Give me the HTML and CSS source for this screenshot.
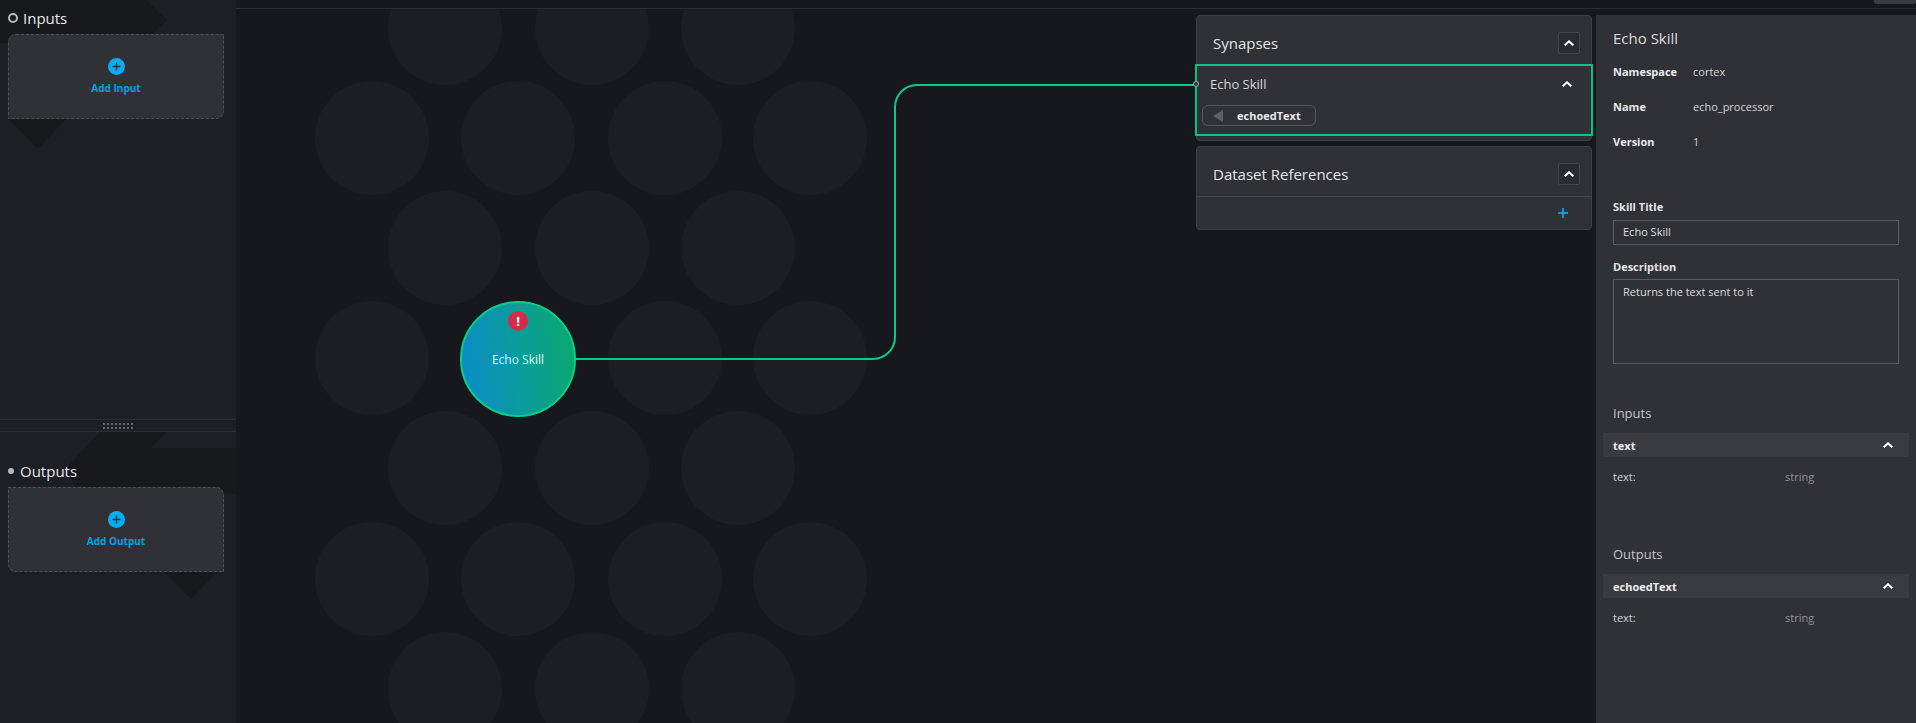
FILE: index.html
```html
<!DOCTYPE html>
<html lang="en">
<head>
  <meta charset="UTF-8">
  <title>Echo Skill</title>
  <link rel="stylesheet" href="styles.css">
</head>
<body>
  <div class="app">
    <aside class="sidebar">
      <section class="dock dock-inputs">
        <svg class="dock-bg" width="236" height="419" viewBox="0 0 236 419">
          <polygon points="0,0 147,0 167,20 144,43 0,43"/>
          <polygon points="8,119 66,119 38,149"/>
        </svg>
        <h2 class="dock-title"><span class="ring"></span>Inputs</h2>
        <div class="add-card add-card-in">
          <span class="add-icon"><svg width="9" height="9" viewBox="0 0 9 9"><path d="M4.5 0.5v8M0.5 4.5h8"/></svg></span>
          <span class="add-label">Add Input</span>
        </div>
      </section>
      <div class="splitter"><span class="grip"></span></div>
      <section class="dock dock-outputs">
        <svg class="dock-bg" width="236" height="292" viewBox="0 0 236 292">
          <polygon points="100,0 167,0 151,16 236,16 236,62 78,62 66,36"/>
          <polygon points="163,139 218,139 191,167"/>
        </svg>
        <h2 class="dock-title"><span class="dot"></span>Outputs</h2>
        <div class="add-card add-card-out">
          <span class="add-icon"><svg width="9" height="9" viewBox="0 0 9 9"><path d="M4.5 0.5v8M0.5 4.5h8"/></svg></span>
          <span class="add-label">Add Output</span>
        </div>
      </section>
    </aside>

    <main class="main">
      <div class="topbar"><span class="topbar-btn"></span></div>
      <div class="workspace">
        <svg class="graph" width="1680" height="714" viewBox="236 9 1680 714">
          <g class="hex">
            <circle cx="445" cy="28" r="57"/><circle cx="592" cy="28" r="57"/><circle cx="738" cy="28" r="57"/>
            <circle cx="372" cy="138" r="57"/><circle cx="518" cy="138" r="57"/><circle cx="665" cy="138" r="57"/><circle cx="810" cy="138" r="57"/>
            <circle cx="445" cy="248" r="57"/><circle cx="592" cy="248" r="57"/><circle cx="738" cy="248" r="57"/>
            <circle cx="372" cy="358" r="57"/><circle cx="518" cy="358" r="57"/><circle cx="665" cy="358" r="57"/><circle cx="810" cy="358" r="57"/>
            <circle cx="445" cy="468" r="57"/><circle cx="592" cy="468" r="57"/><circle cx="738" cy="468" r="57"/>
            <circle cx="372" cy="579" r="57"/><circle cx="518" cy="579" r="57"/><circle cx="665" cy="579" r="57"/><circle cx="810" cy="579" r="57"/>
            <circle cx="445" cy="689" r="57"/><circle cx="592" cy="689" r="57"/><circle cx="738" cy="689" r="57"/>
          </g>
          <path class="edge" d="M576 359H873A22 22 0 0 0 895 337V107A22 22 0 0 1 917 85H1196"/>
        </svg>

        <div class="node">
          <span class="node-badge">!</span>
          <span class="node-label">Echo Skill</span>
        </div>

        <div class="stack">
          <section class="card card-synapses">
            <header class="card-head">
              <h3>Synapses</h3>
              <button class="square-btn"><svg class="chev" width="10" height="6" viewBox="0 0 10 6"><path d="M.7 5.3L5 1.3l4.3 4"/></svg></button>
            </header>
            <div class="synapse">
              <span class="port"></span>
              <div class="synapse-top">
                <span>Echo Skill</span>
                <svg class="chev" width="10" height="6" viewBox="0 0 10 6"><path d="M.7 5.3L5 1.3l4.3 4"/></svg>
              </div>
              <div class="pill"><span class="pill-arrow"></span><b>echoedText</b></div>
            </div>
          </section>

          <section class="card">
            <header class="card-head card-head-line">
              <h3>Dataset References</h3>
              <button class="square-btn"><svg class="chev" width="10" height="6" viewBox="0 0 10 6"><path d="M.7 5.3L5 1.3l4.3 4"/></svg></button>
            </header>
            <div class="card-foot">
              <svg class="plus" width="10" height="10" viewBox="0 0 10 10"><path d="M5 0v10M0 5h10"/></svg>
            </div>
          </section>
        </div>

        <aside class="details">
          <h3 class="details-title">Echo Skill</h3>
          <dl class="meta">
            <dt>Namespace</dt><dd>cortex</dd>
            <dt>Name</dt><dd>echo_processor</dd>
            <dt>Version</dt><dd>1</dd>
          </dl>
          <label class="field-label field-first">Skill Title</label>
          <div class="field field-input">Echo Skill</div>
          <label class="field-label">Description</label>
          <div class="field field-area">Returns the text sent to it</div>

          <h4 class="sub-title sub-inputs">Inputs</h4>
          <div class="row-head">
            <b>text</b>
            <svg class="chev" width="10" height="6" viewBox="0 0 10 6"><path d="M.7 5.3L5 1.3l4.3 4"/></svg>
          </div>
          <div class="prop"><span class="prop-name">text:</span><span class="prop-type">string</span></div>

          <h4 class="sub-title sub-outputs">Outputs</h4>
          <div class="row-head">
            <b>echoedText</b>
            <svg class="chev" width="10" height="6" viewBox="0 0 10 6"><path d="M.7 5.3L5 1.3l4.3 4"/></svg>
          </div>
          <div class="prop"><span class="prop-name">text:</span><span class="prop-type">string</span></div>
        </aside>
      </div>
    </main>
  </div>
</body>
</html>
```

FILE: styles.css
```css
* {
  box-sizing: border-box;
}
html, body {
  margin: 0;
  height: 100%;
  overflow: hidden;
}
body {
  background: #17181d;
  color: #e4e4e6;
  font-family: "Open Sans", "Noto Sans", sans-serif;
  font-size: 11px;
}
h2, h3, h4, dl, dd {
  margin: 0;
  font-weight: 400;
}
.app {
  display: flex;
  height: 723px;
}

/* left dock */
.sidebar {
  width: 236px;
  flex: none;
  display: flex;
  flex-direction: column;
  background: #1e1f24;
}
.dock {
  position: relative;
  padding: 0 12px 0 8px;
}
.dock-inputs {
  height: 419px;
}
.dock-outputs {
  flex: 1;
}
.dock-bg {
  position: absolute;
  left: 0;
  top: 0;
  fill: #18191d;
}
.dock-title {
  position: relative;
  display: flex;
  align-items: center;
  font-size: 15px;
  line-height: 22px;
  color: #e8e8ea;
}
.dock-inputs .dock-title {
  padding-top: 7px;
  height: 34px;
  padding-bottom: 5px;
}
.dock-outputs .dock-title {
  margin-top: 25px;
  height: 30px;
  padding-bottom: 3px;
}
.ring {
  width: 10px;
  height: 10px;
  margin-right: 5px;
  border: 2px solid #b9b9be;
  border-radius: 50%;
}
.dot {
  width: 6px;
  height: 6px;
  margin-right: 6px;
  background: #b9b9be;
  border-radius: 50%;
}
.add-card {
  position: relative;
  height: 85px;
  width: 216px;
  display: flex;
  flex-direction: column;
  align-items: center;
  padding-top: 23px;
  background: #303136;
  border: 1px dashed #505157;
}
.add-card-in {
  border-radius: 8px 0 8px 0;
}
.add-card-out {
  border-radius: 0 8px 0 8px;
}
.add-icon {
  width: 17px;
  height: 17px;
  display: flex;
  align-items: center;
  justify-content: center;
  border-radius: 50%;
  background: #03aef0;
}
.add-icon path {
  stroke: #26303a;
  stroke-width: 1.3;
  fill: none;
}
.add-label {
  margin-top: 5px;
  font-size: 10px;
  line-height: 16px;
  font-weight: 700;
  color: #03a3e4;
}
.splitter {
  height: 13px;
  display: flex;
  align-items: center;
  justify-content: center;
  border-top: 1px solid #2e2f34;
  border-bottom: 1px solid #2e2f34;
}
.grip {
  width: 31px;
  height: 6px;
  background-image: radial-gradient(#66676c 1px, transparent 1.1px);
  background-size: 4px 4px;
  background-position: -1px -1px;
}

/* main area */
.main {
  flex: 1;
  display: flex;
  flex-direction: column;
  min-width: 0;
}
.topbar {
  height: 9px;
  flex: none;
  display: flex;
  justify-content: flex-end;
  border-bottom: 1px solid #2d2e33;
}
.topbar-btn {
  width: 42px;
  height: 4px;
  background: #3a3b40;
  border-radius: 0 0 2px 2px;
}
.workspace {
  position: relative;
  flex: 1;
  display: flex;
  justify-content: flex-end;
  gap: 4px;
  padding-top: 6px;
  overflow: hidden;
}
.graph {
  position: absolute;
  left: 0;
  top: 0;
}
.hex circle {
  fill: #1d1e23;
}
.edge {
  fill: none;
  stroke: #0acb85;
  stroke-width: 2;
}
.node {
  position: absolute;
  left: 224px;
  top: 292px;
  width: 116px;
  height: 116px;
  border-radius: 50%;
  border: 2px solid #0bce85;
  background: linear-gradient(82deg, #0a8ccc, #0aaa6c);
  display: flex;
  align-items: center;
  justify-content: center;
}
.node-badge {
  position: absolute;
  left: 46px;
  top: 8px;
  width: 20px;
  height: 20px;
  border-radius: 50%;
  background: #d62b4a;
  color: #fff;
  font-weight: 700;
  font-size: 13px;
  line-height: 20px;
  text-align: center;
}
.node-label {
  font-size: 12px;
  color: #e6f4f4;
}

/* synapse cards */
.stack {
  position: relative;
  width: 396px;
  flex: none;
  display: flex;
  flex-direction: column;
  gap: 5px;
}
.card {
  background: #303136;
  border: 1px solid #3d3e44;
  border-radius: 4px;
}
.card-synapses {
  padding-bottom: 4px;
}
.card-head {
  height: 48px;
  display: flex;
  align-items: center;
  justify-content: space-between;
  padding: 6px 11px 0 16px;
}
.card-head h3 {
  font-size: 15px;
  color: #e4e4e6;
}
.card-head-line {
  height: 50px;
  padding-top: 5px;
  border-bottom: 1px solid #45464b;
}
.square-btn {
  width: 22px;
  height: 22px;
  padding: 0;
  display: flex;
  align-items: center;
  justify-content: center;
  background: #2a2b30;
  border: 1px solid #45464c;
  border-radius: 2px;
}
.chev path {
  fill: none;
  stroke: #fff;
  stroke-width: 2;
}
.synapse {
  position: relative;
  margin: 0 -2px 0 -2px;
  height: 72px;
  border: 2px solid #0cc184;
  padding: 0 0 0 5px;
}
.synapse-top {
  height: 38px;
  display: flex;
  align-items: center;
  justify-content: space-between;
  padding: 0 19px 2px 8px;
  font-size: 13px;
  color: #d6d6d9;
}
.port {
  position: absolute;
  left: -4px;
  top: 15px;
  width: 6px;
  height: 6px;
  border-radius: 50%;
  border: 1px solid #9fb3ad;
  background: #303136;
}
.pill {
  width: 114px;
  height: 21px;
  margin-top: 1px;
  display: flex;
  align-items: center;
  border: 1px solid #56575c;
  border-radius: 6px;
  padding-left: 10px;
}
.pill-arrow {
  width: 0;
  height: 0;
  border-style: solid;
  border-width: 6px 10px 6px 0;
  border-color: transparent #5e5f67 transparent transparent;
  margin-right: 14px;
}
.pill b {
  color: #e8e8ea;
}
.card-foot {
  height: 32px;
  display: flex;
  align-items: center;
  justify-content: flex-end;
  padding-right: 23px;
}
.plus path {
  stroke: #0a9ad8;
  stroke-width: 2;
  fill: none;
}

/* details panel */
.details {
  position: relative;
  width: 320px;
  flex: none;
  background: #303136;
  padding: 12px 17px 0 17px;
}
.details-title {
  font-size: 15px;
  line-height: 22px;
  color: #dcdcde;
}
.meta {
  display: grid;
  grid-template-columns: 80px 1fr;
  grid-auto-rows: 35px;
  align-items: center;
  margin-top: 5px;
  color: #d4d4d6;
}
.meta dt {
  font-weight: 700;
  color: #e8e8ea;
}
.field-label {
  display: block;
  font-weight: 700;
  line-height: 16px;
  color: #e4e4e6;
}
.field-first {
  margin-top: 40px;
}
.field {
  margin-top: 4px;
  padding: 3px 9px;
  line-height: 16px;
  border: 1px solid #5b5c61;
  color: #dcdcde;
}
.field-input {
  height: 25px;
  margin-top: 5px;
  margin-bottom: 14px;
}
.field-area {
  height: 85px;
  padding-top: 4px;
}
.sub-title {
  font-size: 13px;
  line-height: 20px;
  color: #c4c4c7;
}
.sub-inputs {
  margin-top: 39px;
}
.sub-outputs {
  margin-top: 59px;
}
.row-head {
  margin: 10px -10px 0 -10px;
  height: 24px;
  padding: 0 16px 0 10px;
  display: flex;
  align-items: center;
  justify-content: space-between;
  background: #3a3b40;
  color: #eeeeef;
}
.prop {
  display: flex;
  margin-top: 12px;
  line-height: 16px;
}
.prop-name {
  width: 172px;
  color: #d4d4d6;
}
.prop-type {
  color: #8f9095;
}
```
